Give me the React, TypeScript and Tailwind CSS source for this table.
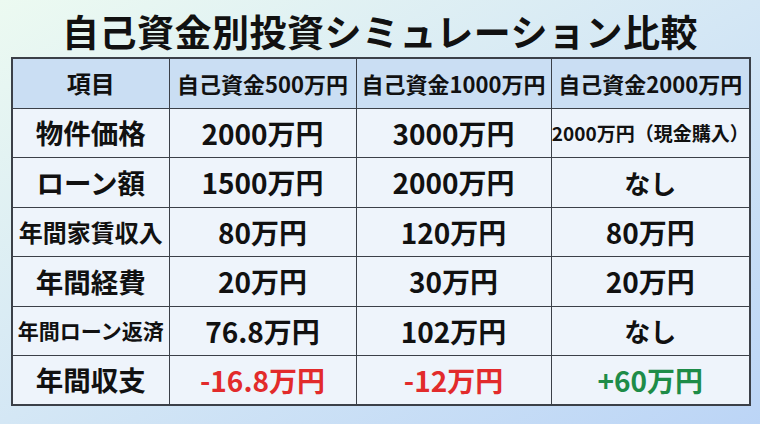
const rows: { label: string; labelSize: string; cells: { text: string; className?: string }[] }[] = [
  {
    label: '物件価格',
    labelSize: 'text-[27.5px]',
    cells: [{ text: '2000万円' }, { text: '3000万円' }, { text: '2000万円（現金購入）', className: 'text-[19px]' }],
  },
  {
    label: 'ローン額',
    labelSize: 'text-[27.5px]',
    cells: [{ text: '1500万円' }, { text: '2000万円' }, { text: 'なし', className: 'text-[26px]' }],
  },
  {
    label: '年間家賃収入',
    labelSize: 'text-[24px]',
    cells: [{ text: '80万円' }, { text: '120万円' }, { text: '80万円' }],
  },
  {
    label: '年間経費',
    labelSize: 'text-[27.5px]',
    cells: [{ text: '20万円' }, { text: '30万円' }, { text: '20万円' }],
  },
  {
    label: '年間ローン返済',
    labelSize: 'text-[21px]',
    cells: [{ text: '76.8万円' }, { text: '102万円' }, { text: 'なし', className: 'text-[26px]' }],
  },
  {
    label: '年間収支',
    labelSize: 'text-[27.5px]',
    cells: [
      { text: '-16.8万円', className: 'text-[28px] text-[#e22b2b]' },
      { text: '-12万円', className: 'text-[28px] text-[#e22b2b]' },
      { text: '+60万円', className: 'text-[28px] text-[#1e8c48]' },
    ],
  },
];

const headers = ['自己資金500万円', '自己資金1000万円', '自己資金2000万円'];

const App = () => {
  return (
    <div
      className="w-[760px] h-[424px] overflow-hidden bg-gradient-to-br from-[#ecfaf1] via-[#d4e7f5] to-[#bcd5f6] px-[11px] text-[#111]"
      style={{ fontFamily: '"Noto Sans CJK JP", "Noto Sans", sans-serif' }}
    >
      <h1 className="h-[57px] pt-[5px] flex items-center justify-center text-[37px] font-bold tracking-[0.5px] leading-none">
        自己資金別投資シミュレーション比較
      </h1>
      <table className="w-[738px] border-collapse border-2 border-[#3b4048] table-fixed">
        <colgroup>
          <col className="w-[157px]" />
          <col className="w-[187px]" />
          <col className="w-[195px]" />
          <col className="w-[199px]" />
        </colgroup>
        <thead>
          <tr className="h-[50px] bg-[#cadef3]">
            <th className="border-[1.5px] border-[#3b4048] text-[24px] font-bold">項目</th>
            {headers.map((h) => (
              <th key={h} className="border-[1.5px] border-[#3b4048] text-[22px] font-bold whitespace-nowrap">
                {h}
              </th>
            ))}
          </tr>
        </thead>
        <tbody>
          {rows.map((r) => (
            <tr key={r.label} className="h-[49.5px] bg-[#eef4fb]">
              <td className={`border-[1.5px] border-[#3b4048] text-center font-bold whitespace-nowrap ${r.labelSize}`}>
                {r.label}
              </td>
              {r.cells.map((c, i) => (
                <td
                  key={i}
                  className={`border-[1.5px] border-[#3b4048] text-center font-bold whitespace-nowrap ${c.className ?? 'text-[28px]'}`}
                >
                  {c.text}
                </td>
              ))}
            </tr>
          ))}
        </tbody>
      </table>
    </div>
  );
};

export default App;
